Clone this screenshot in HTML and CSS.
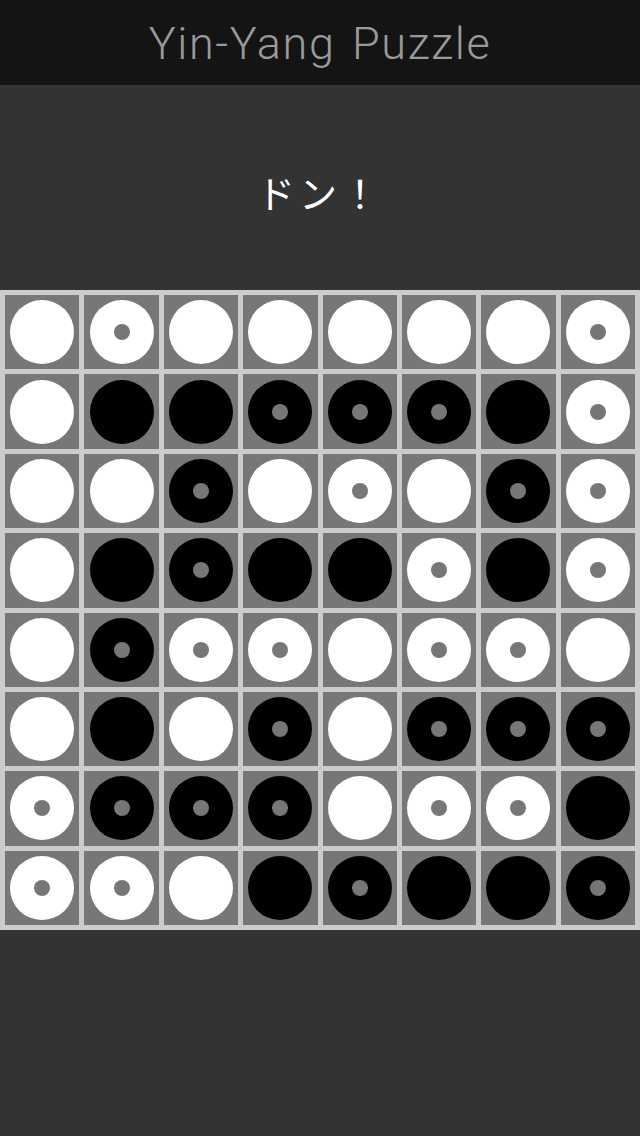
FILE: index.html
```html
<!DOCTYPE html>
<html lang="ja">
<head>
<meta charset="utf-8">
<title>Yin-Yang Puzzle</title>
<link rel="stylesheet" href="styles.css">
</head>
<body>
<header class="topbar"><h1 class="title">Yin-Yang Puzzle</h1></header>
<section class="message"><p class="message-text">ドン！</p></section>
<main class="board">
  <div class="cell"><span class="stone white"></span></div>
  <div class="cell"><span class="stone white dot"></span></div>
  <div class="cell"><span class="stone white"></span></div>
  <div class="cell"><span class="stone white"></span></div>
  <div class="cell"><span class="stone white"></span></div>
  <div class="cell"><span class="stone white"></span></div>
  <div class="cell"><span class="stone white"></span></div>
  <div class="cell"><span class="stone white dot"></span></div>

  <div class="cell"><span class="stone white"></span></div>
  <div class="cell"><span class="stone black"></span></div>
  <div class="cell"><span class="stone black"></span></div>
  <div class="cell"><span class="stone black dot"></span></div>
  <div class="cell"><span class="stone black dot"></span></div>
  <div class="cell"><span class="stone black dot"></span></div>
  <div class="cell"><span class="stone black"></span></div>
  <div class="cell"><span class="stone white dot"></span></div>

  <div class="cell"><span class="stone white"></span></div>
  <div class="cell"><span class="stone white"></span></div>
  <div class="cell"><span class="stone black dot"></span></div>
  <div class="cell"><span class="stone white"></span></div>
  <div class="cell"><span class="stone white dot"></span></div>
  <div class="cell"><span class="stone white"></span></div>
  <div class="cell"><span class="stone black dot"></span></div>
  <div class="cell"><span class="stone white dot"></span></div>

  <div class="cell"><span class="stone white"></span></div>
  <div class="cell"><span class="stone black"></span></div>
  <div class="cell"><span class="stone black dot"></span></div>
  <div class="cell"><span class="stone black"></span></div>
  <div class="cell"><span class="stone black"></span></div>
  <div class="cell"><span class="stone white dot"></span></div>
  <div class="cell"><span class="stone black"></span></div>
  <div class="cell"><span class="stone white dot"></span></div>

  <div class="cell"><span class="stone white"></span></div>
  <div class="cell"><span class="stone black dot"></span></div>
  <div class="cell"><span class="stone white dot"></span></div>
  <div class="cell"><span class="stone white dot"></span></div>
  <div class="cell"><span class="stone white"></span></div>
  <div class="cell"><span class="stone white dot"></span></div>
  <div class="cell"><span class="stone white dot"></span></div>
  <div class="cell"><span class="stone white"></span></div>

  <div class="cell"><span class="stone white"></span></div>
  <div class="cell"><span class="stone black"></span></div>
  <div class="cell"><span class="stone white"></span></div>
  <div class="cell"><span class="stone black dot"></span></div>
  <div class="cell"><span class="stone white"></span></div>
  <div class="cell"><span class="stone black dot"></span></div>
  <div class="cell"><span class="stone black dot"></span></div>
  <div class="cell"><span class="stone black dot"></span></div>

  <div class="cell"><span class="stone white dot"></span></div>
  <div class="cell"><span class="stone black dot"></span></div>
  <div class="cell"><span class="stone black dot"></span></div>
  <div class="cell"><span class="stone black dot"></span></div>
  <div class="cell"><span class="stone white"></span></div>
  <div class="cell"><span class="stone white dot"></span></div>
  <div class="cell"><span class="stone white dot"></span></div>
  <div class="cell"><span class="stone black"></span></div>

  <div class="cell"><span class="stone white dot"></span></div>
  <div class="cell"><span class="stone white dot"></span></div>
  <div class="cell"><span class="stone white"></span></div>
  <div class="cell"><span class="stone black"></span></div>
  <div class="cell"><span class="stone black dot"></span></div>
  <div class="cell"><span class="stone black"></span></div>
  <div class="cell"><span class="stone black"></span></div>
  <div class="cell"><span class="stone black dot"></span></div>
</main>
</body>
</html>
```
FILE: styles.css
```css
html, body {
  margin: 0;
  padding: 0;
}
body {
  background: #333333;
  width: 640px;
  height: 1136px;
  overflow: hidden;
  font-family: "Roboto", "Noto Sans", sans-serif;
}
.topbar {
  height: 85px;
  background: #141414;
  display: flex;
  align-items: center;
  justify-content: center;
}
.title {
  margin: 0;
  font-family: "Roboto", sans-serif;
  font-weight: 300;
  font-size: 45px;
  color: #9a9a9a;
  letter-spacing: 1.6px;
  word-spacing: 4px;
  line-height: 1;
  padding-top: 2px;
}
.message {
  height: 205px;
  display: flex;
  align-items: center;
  justify-content: center;
}
.message-text {
  margin: 0;
  padding-top: 8px;
  font-family: "Noto Sans CJK JP", sans-serif;
  font-weight: 400;
  font-size: 38px;
  color: #ffffff;
  letter-spacing: 4px;
}
.board {
  width: 640px;
  height: 640px;
  box-sizing: border-box;
  padding: 5px;
  background: #cccccc;
  display: grid;
  grid-template-columns: repeat(8, 1fr);
  grid-template-rows: repeat(8, 1fr);
  gap: 5px;
}
.cell {
  background: #777777;
  display: flex;
  align-items: center;
  justify-content: center;
}
.stone {
  width: 64px;
  height: 64px;
  border-radius: 50%;
  display: flex;
  align-items: center;
  justify-content: center;
}
.stone.white { background: #ffffff; }
.stone.black { background: #000000; }
.stone.dot::after {
  content: "";
  width: 16px;
  height: 16px;
  border-radius: 50%;
  background: #777777;
}
```
